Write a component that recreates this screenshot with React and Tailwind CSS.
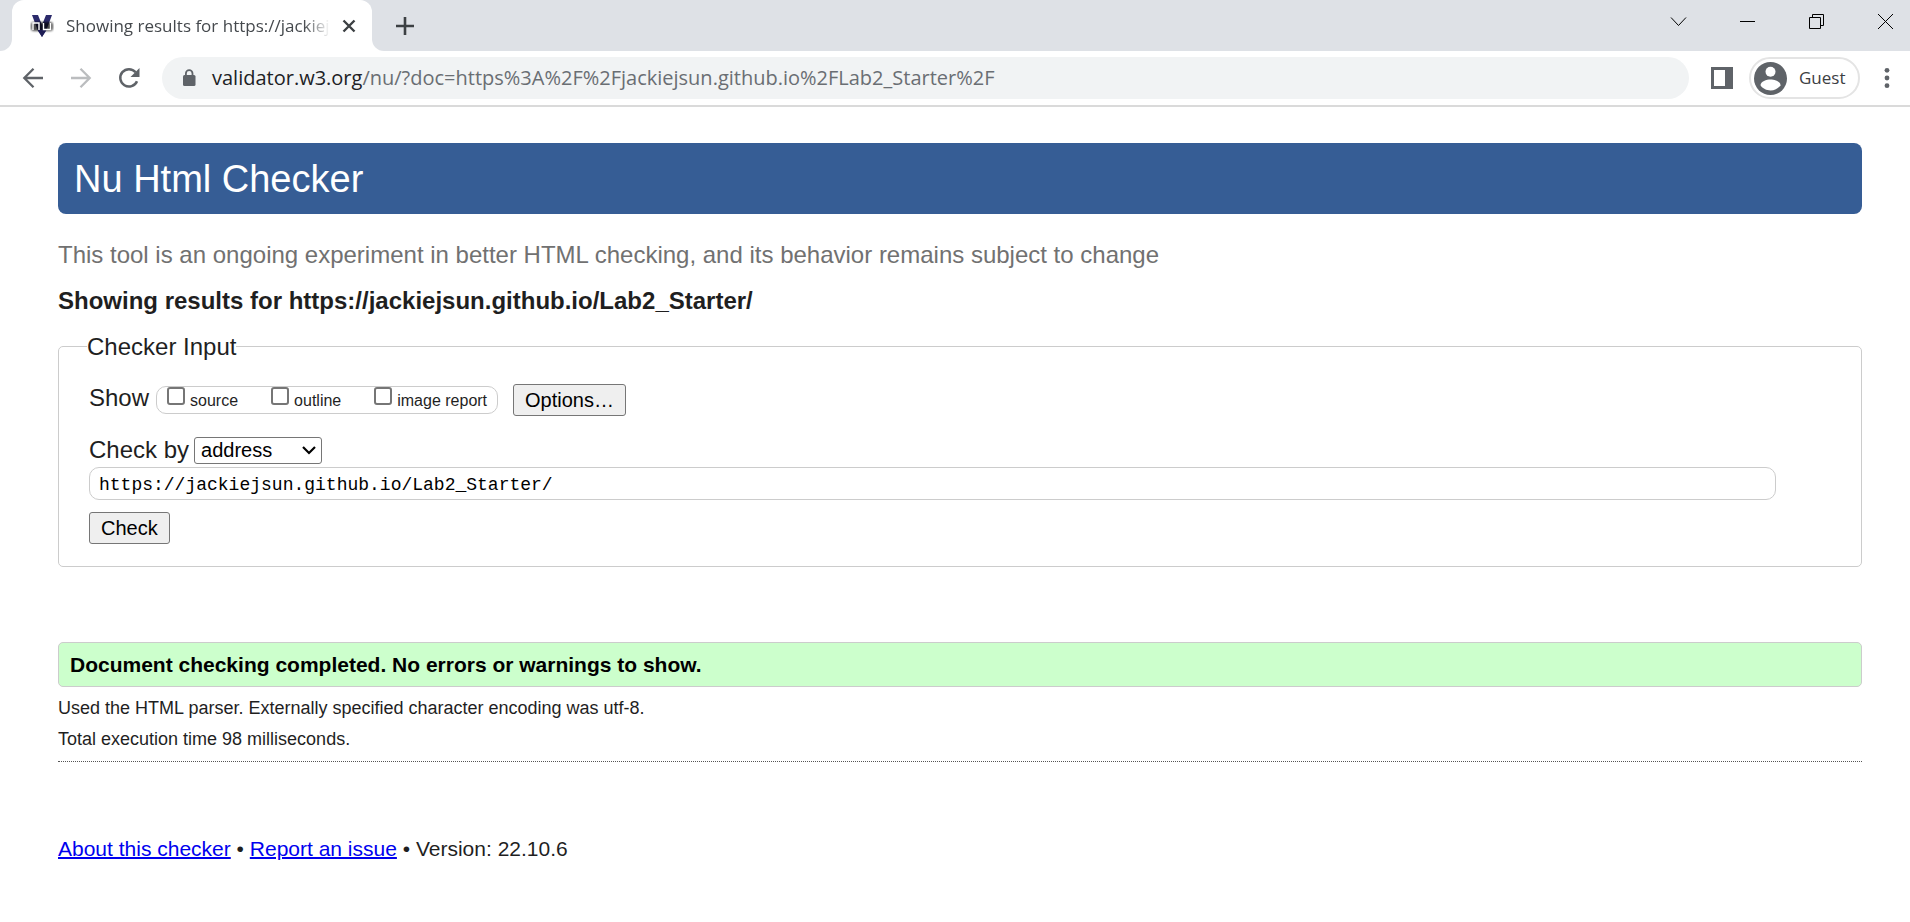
function Favicon() {
  return (
    <svg width="24" height="26" viewBox="0 0 24 26" aria-hidden="true" className="shrink-0">
      <defs>
        <filter id="glow" x="-30%" y="-30%" width="160%" height="160%">
          <feGaussianBlur stdDeviation="1.3" />
        </filter>
      </defs>
      <path d="M2 2h6l4 10 4-10h6l-6 16-4 6-4-6z" fill="#2b2a6b" />
      <rect x="1" y="9" width="22" height="9" rx="3" fill="#000" opacity=".7" filter="url(#glow)" />
      <path d="M8 17h8l-4 7z" fill="#1e1d55" />
      <path d="M3 17v-7h6v7M13.500 10v6.500h7V10" fill="none" stroke="#fff" strokeWidth="1.400" />
    </svg>
  );
}

function WindowButton({ label, children }) {
  return (
    <button type="button" aria-label={label} className="flex h-9 w-[49px] items-center justify-center">
      <svg width="17" height="17" viewBox="0 0 17 17" fill="none" stroke="#000" strokeWidth="1" aria-hidden="true">
        {children}
      </svg>
    </button>
  );
}

function TabStrip() {
  return (
    <div className="flex h-[51px] justify-between bg-[#dee1e6]">
      <div className="flex">
        <div className="flex w-3 flex-col justify-end">
          <div className="h-3 bg-white"><div className="h-3 rounded-br-xl bg-[#dee1e6]" /></div>
        </div>
        <div className="flex w-[360px] items-center rounded-t-xl bg-white pr-4 pl-[18px]">
          <Favicon />
          <div className="ml-3 w-[264px] text-[17px] leading-6 whitespace-nowrap text-[#45494d] [mask-image:linear-gradient(to_right,black_90%,transparent)]">
            Showing results for https://jackiej
          </div>
          <button type="button" aria-label="Close tab" className="ml-3 flex size-4 items-center justify-center">
            <svg width="14" height="14" viewBox="0 0 14 14" fill="none" stroke="#3c4043" strokeWidth="2.400" aria-hidden="true">
              <path d="M1.500 1.500l11 11M12.500 1.500l-11 11" />
            </svg>
          </button>
        </div>
        <div className="flex w-3 flex-col justify-end">
          <div className="h-3 bg-white"><div className="h-3 rounded-bl-xl bg-[#dee1e6]" /></div>
        </div>
        <button type="button" aria-label="New tab" className="ml-[11px] flex w-5 items-center justify-center">
          <svg width="18" height="18" viewBox="0 0 18 18" fill="none" stroke="#3c4043" strokeWidth="2.600" aria-hidden="true">
            <path d="M9 0v18M0 9h18" />
          </svg>
        </button>
      </div>
      <div className="flex gap-5 pt-[3px]">
        <WindowButton label="Search tabs"><path d="M1 4.500l7.500 8 7.500-8" /></WindowButton>
        <WindowButton label="Minimize"><path d="M1 8.500h15" /></WindowButton>
        <WindowButton label="Restore">
          <path d="M1.500 4.500h11v11h-11zM4.500 4.500v-3h11v11h-3" />
        </WindowButton>
        <WindowButton label="Close"><path d="M1 1l15 15M16 1l-15 15" /></WindowButton>
      </div>
    </div>
  );
}

function Toolbar() {
  return (
    <div className="flex h-14 items-center border-b-2 border-[#dadada] bg-white">
      <div className="flex gap-6 pl-[21px]">
        <button type="button" aria-label="Back">
          <svg width="24" height="24" viewBox="0 0 24 24" fill="none" stroke="#5f6368" strokeWidth="2.300" aria-hidden="true">
            <path d="M22 12H3.500M12.500 2.800L3.300 12l9.200 9.200" />
          </svg>
        </button>
        <button type="button" aria-label="Forward">
          <svg width="24" height="24" viewBox="0 0 24 24" fill="none" stroke="#bbbdbf" strokeWidth="2.300" aria-hidden="true">
            <path d="M2 12h18.500M11.500 2.800l9.200 9.200-9.200 9.200" />
          </svg>
        </button>
        <button type="button" aria-label="Reload">
          <svg width="24" height="24" viewBox="0 0 24 24" aria-hidden="true">
            <path d="M20 15.200A8.700 8.700 0 1 1 18.600 6.200" fill="none" stroke="#5f6368" strokeWidth="2.500" />
            <path d="M22.500 2v9h-9z" fill="#5f6368" />
          </svg>
        </button>
      </div>
      <div className="ml-[21px] flex h-[42px] flex-1 items-center rounded-full bg-[#f1f3f4] pl-5 text-[20px] leading-7">
        <svg width="14" height="18" viewBox="0 0 14 18" aria-hidden="true">
          <rect x="1" y="6" width="12.500" height="11" rx="1.500" fill="#5f6368" />
          <path d="M3.900 7V4.500a3.300 3.300 0 0 1 6.600 0V7" fill="none" stroke="#5f6368" strokeWidth="1.800" />
        </svg>
        <span className="ml-4 text-[#202124]">
          validator.w3.org<span className="text-[#6a6e73]">/nu/?doc=https%3A%2F%2Fjackiejsun.github.io%2FLab2_Starter%2F</span>
        </span>
      </div>
      <button type="button" aria-label="Side panel" className="ml-[22px]">
        <svg width="22" height="22" viewBox="0 0 22 22" aria-hidden="true">
          <path d="M0 0h22v22H0zM3 3v16h11V3z" fill="#5f6368" fillRule="evenodd" />
        </svg>
      </button>
      <button type="button" className="ml-4 flex h-[42px] w-[111px] items-center gap-3 rounded-full border-2 border-[#e4e4e4] pl-[3px] text-[17px] leading-6 text-[#3c4043]">
        <svg width="33" height="33" viewBox="0 0 33 33" aria-hidden="true">
          <circle cx="16.500" cy="16.500" r="16.500" fill="#5f6368" />
          <circle cx="16.500" cy="9.800" r="5" fill="#fff" />
          <path d="M6.500 23.200c0-3.700 6-5.700 10-5.700s10 2 10 5.700c-2 3.200-6 5.200-10 5.200s-8-2-10-5.200z" fill="#fff" />
        </svg>
        Guest
      </button>
      <button type="button" aria-label="Menu" className="mr-[18px] ml-[22px]">
        <svg width="10" height="22" viewBox="0 0 10 22" fill="#5f6368" aria-hidden="true">
          <circle cx="5" cy="3.300" r="2.400" /><circle cx="5" cy="11" r="2.400" /><circle cx="5" cy="18.700" r="2.400" />
        </svg>
      </button>
    </div>
  );
}

function ShowOption({ id, label }) {
  return (
    <span className="flex items-end gap-[5px]">
      <input
        id={id}
        type="checkbox"
        className="mb-2 size-[18px] appearance-none rounded-[3px] border-2 border-[#767676] bg-white checked:bg-[#0075ff]"
      />
      <label htmlFor={id}>{label}</label>
    </span>
  );
}

const buttonClass =
  "h-8 rounded-[3px] border border-[#767676] bg-[#efefef] px-[11px] text-[20px] leading-6 text-black";

export default function App() {
  return (
    <div className="min-h-screen bg-white">
      <header className="font-['Open_Sans',sans-serif]">
        <TabStrip />
        <Toolbar />
      </header>
      <main className="pt-9 pr-12 pl-[58px] font-['Liberation_Sans',sans-serif] text-[24px] leading-7 text-[#1f1f1f]">
        <h1 className="rounded-lg bg-[#365d95] px-4 pt-3.5 pb-3 text-[38px] leading-[45px] text-white">Nu Html Checker</h1>
        <p className="mt-[27px] text-[#717171]">
          This tool is an ongoing experiment in better HTML checking, and its behavior remains subject to change
        </p>
        <h2 className="mt-[18px] font-bold">Showing results for https://jackiejsun.github.io/Lab2_Starter/</h2>
        <form onSubmit={(e) => e.preventDefault()}>
          <fieldset className="mt-4 rounded-[5px] border border-[#ccc] pr-[85px] pb-[22px] pl-[30px]">
            <legend className="-ml-[2px] pt-0.5">Checker Input</legend>
            <div className="mt-[23px] flex items-center">
              <span className="pb-1">Show</span>
              <div className="mr-[15px] ml-[7px] flex h-7 items-center gap-[33px] rounded-[10px] border border-[#ccc] px-2.5 text-[16px] leading-6">
                <ShowOption id="source" label="source" />
                <ShowOption id="outline" label="outline" />
                <ShowOption id="image" label="image report" />
              </div>
              <button type="button" className={buttonClass}>Options…</button>
            </div>
            <div className="mt-5 flex items-center gap-[5px]">
              <label htmlFor="mode">Check by</label>
              <div className="relative">
                <select id="mode" className="block h-[27px] w-32 appearance-none rounded-[3px] border border-[#767676] bg-white pl-1.5 text-[20px] leading-6 text-black">
                  <option>address</option>
                  <option>file upload</option>
                  <option>text input</option>
                </select>
                <svg width="14" height="9" viewBox="0 0 14 9" fill="none" stroke="#000" strokeWidth="2.200" aria-hidden="true" className="pointer-events-none absolute top-[9px] right-1.5">
                  <path d="M1 1l6 6 6-6" />
                </svg>
              </div>
            </div>
            <input
              type="text"
              aria-label="Address"
              defaultValue="https://jackiejsun.github.io/Lab2_Starter/"
              className="mt-[3px] block h-[33px] w-full rounded-[10px] border border-[#ccc] px-[9px] pt-0.5 font-['Liberation_Mono',monospace] text-[18px] leading-6 text-black"
            />
            <button type="submit" className={`mt-3 block ${buttonClass}`}>Check</button>
          </fieldset>
        </form>
        <p className="mt-[75px] rounded-[5px] border border-[#ccc] bg-[#cfc] px-[11px] pt-2 pb-[7px] text-[21px] font-bold text-black">
          Document checking completed. No errors or warnings to show.
        </p>
        <div className="border-b border-dotted border-[#555] pt-1.5 pb-1.5 text-[18px] leading-[31px]">
          <p>Used the HTML parser. Externally specified character encoding was utf-8.</p>
          <p>Total execution time 98 milliseconds.</p>
        </div>
        <footer className="mt-[73px] text-[21px]">
          <a href="#about" className="text-[#00e] underline decoration-2">About this checker</a>
          {" • "}
          <a href="#issue" className="text-[#00e] underline decoration-2">Report an issue</a>
          {" • Version: 22.10.6"}
        </footer>
      </main>
    </div>
  );
}
